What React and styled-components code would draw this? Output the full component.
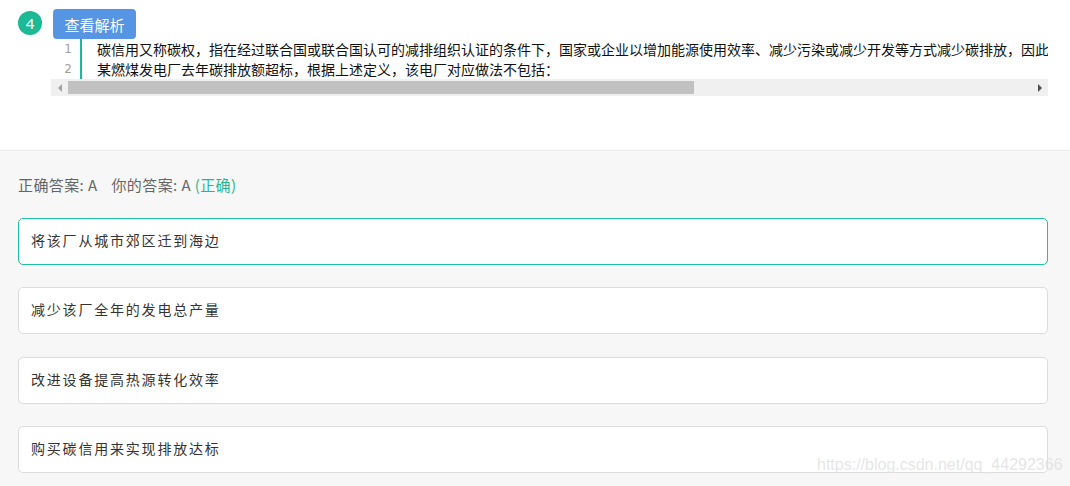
import React from "react";
import styled, { createGlobalStyle } from "styled-components";

const Global = createGlobalStyle`
  html, body { margin: 0; padding: 0; background: #f7f7f7; }
  body { font-family: "Noto Sans CJK SC", "Noto Sans", sans-serif; }
`;

const Page = styled.div`
  position: relative;
  width: 1070px;
  height: 486px;
  overflow: hidden;
  background: #f7f7f7;
`;

const TopSection = styled.section`
  background: #fff;
  height: 151px;
  border-bottom: 1px solid #ebebeb;
  box-sizing: border-box;
  padding: 9px 22px 0 18px;
`;

const HeaderRow = styled.div`
  display: flex;
  align-items: flex-start;
  gap: 11px;
`;

const Badge = styled.div`
  width: 24px;
  height: 24px;
  margin-top: 2px;
  border-radius: 50%;
  background: #1bb996;
  color: #fff;
  font-size: 15px;
  line-height: 24px;
  text-align: center;
  font-family: "Noto Sans", sans-serif;
`;

const AnalysisButton = styled.button`
  width: 83px;
  height: 30px;
  border: none;
  border-radius: 4px;
  background: #5595e3;
  color: #fff;
  font-family: "Noto Sans CJK SC", sans-serif;
  font-size: 15px;
  padding: 0;
  cursor: pointer;
`;

const CodeBlock = styled.div`
  margin-left: 33px;
  width: 997px;
`;

const CodeBody = styled.div`
  display: flex;
  overflow: hidden;
`;

const Gutter = styled.div`
  width: 29px;
  flex: none;
  border-right: 2px solid #1bb996;
`;

const LineNo = styled.div`
  height: 20px;
  line-height: 20px;
  font-size: 12px;
  color: #a0a0a0;
  text-align: right;
  padding-right: 8px;
  font-family: "DejaVu Sans", sans-serif;
`;

const Lines = styled.div`
  padding-left: 15px;
  white-space: nowrap;
`;

const CodeLine = styled.div`
  height: 20px;
  line-height: 20px;
  font-size: 14px;
  color: #111;
  font-family: "Noto Sans CJK SC", sans-serif;
`;

const ScrollBar = styled.div`
  display: flex;
  height: 17px;
  background: #f0f0f0;
  align-items: center;
`;

const ArrowBtn = styled.div`
  width: 17px;
  height: 17px;
  flex: none;
  display: flex;
  align-items: center;
  justify-content: center;
  &::before {
    content: "";
    width: 0;
    height: 0;
    border-top: 4px solid transparent;
    border-bottom: 4px solid transparent;
    ${(p) =>
      p.$dir === "left"
        ? "border-right: 4px solid #a3a3a3;"
        : "border-left: 4px solid #505050;"}
  }
`;

const Track = styled.div`
  flex: 1;
  height: 13px;
  display: flex;
`;

const Thumb = styled.div`
  height: 13px;
  background: #c1c1c1;
`;

const BottomSection = styled.section`
  padding: 24px 22px 0 18px;
`;

const AnswerLine = styled.div`
  font-size: 15px;
  color: #666;
  height: 20px;
  line-height: 20px;
  margin-bottom: 23px;
  white-space: pre;
  letter-spacing: 0.4px;
`;

const Gap = styled.span`
  display: inline-block;
  width: ${(p) => p.$w}px;
`;

const Correct = styled.span`
  color: #1bb996;
`;

const Option = styled.div`
  box-sizing: border-box;
  height: 47px;
  margin-bottom: 22.4px;
  background: #fff;
  border: 1px solid ${(p) => (p.$selected ? "#1bc49c" : "#dcdcdc")};
  border-radius: 5px;
  padding: 0 12px 3px;
  display: flex;
  align-items: center;
  font-size: 14px;
  letter-spacing: 1.8px;
  color: #333;
`;

const Watermark = styled.div`
  position: absolute;
  left: 817px;
  top: 456px;
  font-family: "Liberation Sans", Arial, sans-serif;
  font-size: 16px;
  color: rgba(225, 225, 225, 0.85);
  white-space: nowrap;
`;

const lines = [
  "碳信用又称碳权，指在经过联合国或联合国认可的减排组织认证的条件下，国家或企业以增加能源使用效率、减少污染或减少开发等方式减少碳排放，因此得到可以进入碳交易市场的碳排放计量单位。",
  "某燃煤发电厂去年碳排放额超标，根据上述定义，该电厂对应做法不包括：",
];

const options = [
  "将该厂从城市郊区迁到海边",
  "减少该厂全年的发电总产量",
  "改进设备提高热源转化效率",
  "购买碳信用来实现排放达标",
];

export default function App() {
  return (
    <Page>
      <Global />
      <TopSection>
        <HeaderRow>
          <Badge>4</Badge>
          <AnalysisButton>查看解析</AnalysisButton>
        </HeaderRow>
        <CodeBlock>
          <CodeBody>
            <Gutter>
              {lines.map((_, i) => (
                <LineNo key={i}>{i + 1}</LineNo>
              ))}
            </Gutter>
            <Lines>
              {lines.map((l, i) => (
                <CodeLine key={i}>{l}</CodeLine>
              ))}
            </Lines>
          </CodeBody>
          <ScrollBar>
            <ArrowBtn $dir="left" />
            <Track>
              <Thumb style={{ width: "65%" }} />
            </Track>
            <ArrowBtn $dir="right" />
          </ScrollBar>
        </CodeBlock>
      </TopSection>
      <BottomSection>
        <AnswerLine>
          正确答案: A<Gap $w={14} />你的答案: A <Correct>(正确)</Correct>
        </AnswerLine>
        {options.map((o, i) => (
          <Option key={i} $selected={i === 0}>
            {o}
          </Option>
        ))}
      </BottomSection>
      <Watermark>https://blog.csdn.net/qq_44292366</Watermark>
    </Page>
  );
}
